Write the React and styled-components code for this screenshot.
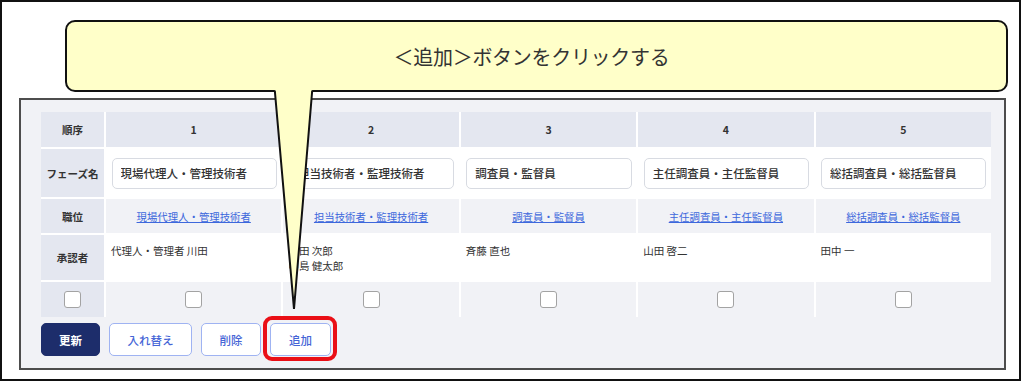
import React from 'react';
import styled, { createGlobalStyle } from 'styled-components';

const GlobalStyle = createGlobalStyle`
  body {
    margin: 0;
    background: #fff;
    font-family: "Noto Sans CJK JP", "Noto Sans", sans-serif;
  }
`

const phases = [
  { no: 1, name: '現場代理人・管理技術者', role: '現場代理人・管理技術者', approvers: ['代理人・管理者 川田'] },
  { no: 2, name: '担当技術者・監理技術者', role: '担当技術者・監理技術者', approvers: ['山田 次郎', '中島 健太郎'] },
  { no: 3, name: '調査員・監督員', role: '調査員・監督員', approvers: ['斉藤 直也'] },
  { no: 4, name: '主任調査員・主任監督員', role: '主任調査員・主任監督員', approvers: ['山田 啓二'] },
  { no: 5, name: '総括調査員・総括監督員', role: '総括調査員・総括監督員', approvers: ['田中 一'] },
]

function App() {
  return (
    <>
      <GlobalStyle />
      <Frame>
        <Callout>
          ＜追加＞ボタンをクリックする
          <Tail width="44" height="224" viewBox="0 0 44 224">
            <polygon points="2.6,0 22,221 40.4,0" fill="#ffffc9" />
            <polyline points="2.8,2.5 22,221 40.2,2.5" fill="none" stroke="#111" strokeWidth="2" />
          </Tail>
        </Callout>
        <Panel>
          <Grid>
            <Cell $tone="head" $bold>順序</Cell>
            {phases.map(p => <Cell key={'n' + p.no} $tone="head" $bold>{p.no}</Cell>)}

            <Cell $tone="head" $bold>フェーズ名</Cell>
            {phases.map(p => (
              <Cell key={'f' + p.no} $tone="white">
                <NameInput readOnly defaultValue={p.name} />
              </Cell>
            ))}

            <Cell $tone="head" $bold>職位</Cell>
            {phases.map(p => (
              <Cell key={'r' + p.no} $tone="soft">
                <RoleLink href="#">{p.role}</RoleLink>
              </Cell>
            ))}

            <Cell $tone="head" $bold>承認者</Cell>
            {phases.map(p => (
              <ApproverCell key={'a' + p.no}>
                {p.approvers.map(a => <div key={a}>{a}</div>)}
              </ApproverCell>
            ))}

            <Cell $tone="head"><Check type="checkbox" /></Cell>
            {phases.map(p => (
              <Cell key={'c' + p.no} $tone="soft"><Check type="checkbox" /></Cell>
            ))}
          </Grid>
          <Actions>
            <Button $primary $w={59}>更新</Button>
            <Button $w={83}>入れ替え</Button>
            <Button $w={60}>削除</Button>
            <Highlight>
              <Button $w={61}>追加</Button>
            </Highlight>
          </Actions>
        </Panel>
      </Frame>
    </>
  );
}

const Frame = styled.div`
  position: relative;
  box-sizing: border-box;
  width: 1021px;
  height: 381px;
  border: 2px solid #111;
  padding-top: 18px;
`
const Callout = styled.div`
  position: relative;
  z-index: 2;
  box-sizing: border-box;
  margin-left: 63px;
  width: 943px;
  height: 72px;
  border: 2px solid #111;
  border-radius: 10px;
  background: #ffffc9;
  display: flex;
  justify-content: center;
  align-items: center;
  padding-right: 10px;
  font-size: 20px;
  color: #333;
  letter-spacing: -0.3px;
`
const Tail = styled.svg`
  position: absolute;
  left: 205px;
  top: 66px;
  overflow: visible;
`
const Panel = styled.section`
  box-sizing: border-box;
  margin: 6px 0 0 17px;
  width: 987px;
  height: 272px;
  border: 2px solid #4d4d4d;
  background: #f1f2f6;
  padding: 12px 13px 0 20px;
`
const Grid = styled.div`
  display: grid;
  width: 950px;
  grid-template-columns: 63px repeat(5, 1fr);
  grid-template-rows: 35px 48px 34px 45px 35px;
  gap: 2px;
  background: #fff;
`
const tones = { head: '#e4e7f0', white: '#fff', soft: '#f1f2f6' }
const Cell = styled.div`
  display: flex;
  justify-content: center;
  align-items: center;
  background: ${p => tones[p.$tone]};
  font-size: 10.5px;
  font-weight: ${p => (p.$bold ? 700 : 400)};
  color: #333;
`
const NameInput = styled.input`
  box-sizing: border-box;
  width: calc(100% - 10px);
  height: 31px;
  margin-left: 1px;
  border: 1px solid #d8dbe2;
  border-radius: 5px;
  background: #fff;
  padding: 0 8px;
  font: 500 11.5px "Noto Sans CJK JP", "Noto Sans", sans-serif;
  color: #333;
  outline: none;
`
const RoleLink = styled.a`
  font-size: 10.4px;
  color: #3d68dc;
  text-decoration: underline;
`
const ApproverCell = styled.div`
  background: #fff;
  padding: 8px 5px 0;
  font-size: 10.5px;
  line-height: 15px;
  color: #333;
`
const Check = styled.input`
  appearance: none;
  margin: 0;
  width: 17px;
  height: 17px;
  border: 1px solid #a3a3a3;
  border-radius: 3px;
  background: #fff;
`
const Actions = styled.div`
  display: flex;
  gap: 9px;
  margin-top: 6px;
`
const Button = styled.button`
  box-sizing: border-box;
  width: ${p => p.$w}px;
  height: 33px;
  padding: 0;
  border-radius: 5px;
  border: 1px solid ${p => (p.$primary ? '#1d2d6b' : '#9fb3f2')};
  background: ${p => (p.$primary ? '#1d2d6b' : '#fff')};
  color: ${p => (p.$primary ? '#fff' : '#4565d6')};
  font: ${p => (p.$primary ? 700 : 500)} 11.5px "Noto Sans CJK JP", "Noto Sans", sans-serif;
`
const Highlight = styled.div`
  position: relative;
  display: flex;
  &::after {
    content: '';
    position: absolute;
    inset: -7px -6px -5px -7px;
    border: 4px solid #ea0f16;
    border-radius: 9px;
  }
`

export default App;
